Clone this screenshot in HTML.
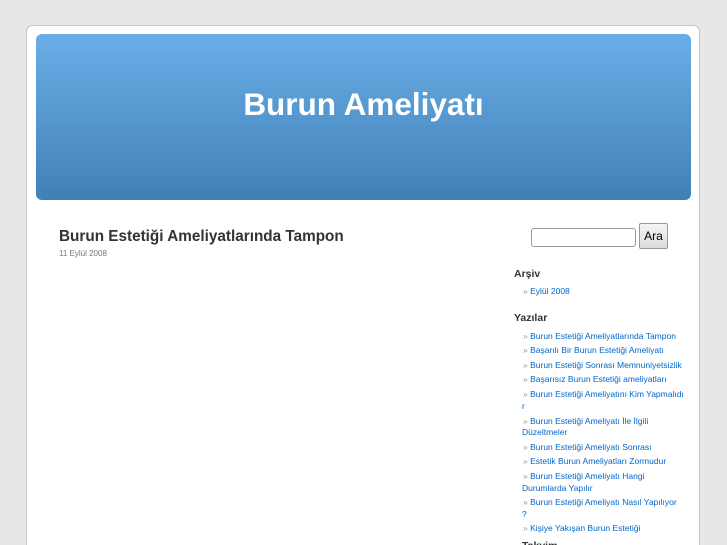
<html><head><style>
html,body{margin:0;width:727px;height:545px;overflow:hidden}
body{background:#e7e7e7;font-family:"Liberation Sans",sans-serif;position:relative}
#page{position:absolute;left:26px;top:25px;width:672px;height:560px;background:#fff;border:1px solid #c5c5c5;border-radius:6px}
#hdr{position:absolute;left:36px;top:34px;width:655px;height:166px;border-radius:6px;background:linear-gradient(#69aee7,#4180b6)}
#hdr h1{margin:0;position:absolute;top:52px;width:100%;text-align:center;color:#fff;font-size:31.5px;font-weight:bold}
.t{position:absolute;white-space:nowrap}
.a{color:#0066cc;font-size:8.5px}
.a::before{content:"» ";color:#999}
.c{color:#0066cc;font-size:8.5px}
h3{margin:0;font-size:10.5px;color:#333}
</style></head><body>
<div id="page"></div>
<div id="hdr"><h1>Burun Ameliyatı</h1></div>
<div class="t" style="left:59px;top:228px;font-size:15.3px;font-weight:bold;color:#333">Burun Estetiği Ameliyatlarında Tampon</div>
<div class="t" style="left:59px;top:249px;font-size:8px;color:#777">11 Eylül 2008</div>
<div class="t" style="left:531px;top:228px;width:103px;height:17px;border:1px solid #999;border-radius:3px"></div>
<div class="t" style="left:639px;top:223px;width:27px;height:24px;border:1px solid #999;border-radius:2px;background:linear-gradient(#f5f5f5,#ddd);font-size:12px;text-align:center;line-height:24px">Ara</div>
<h3 class="t" style="left:514px;top:268px">Arşiv</h3>
<div class="t a" style="left:523px;top:286px">Eylül 2008</div>
<h3 class="t" style="left:514px;top:312px">Yazılar</h3>
<div class="t a" style="left:523px;top:331px">Burun Estetiği Ameliyatlarında Tampon</div>
<div class="t a" style="left:523px;top:345px">Başarılı Bir Burun Estetiği Ameliyatı</div>
<div class="t a" style="left:523px;top:360px">Burun Estetiği Sonrası Memnuniyetsizlik</div>
<div class="t a" style="left:523px;top:374px">Başarısız Burun Estetiği ameliyatları</div>
<div class="t a" style="left:523px;top:389px">Burun Estetiği Ameliyatını Kim Yapmalıdı</div>
<div class="t c" style="left:522px;top:401px">r</div>
<div class="t a" style="left:523px;top:416px">Burun Estetiği Ameliyatı İle İlgili</div>
<div class="t c" style="left:522px;top:427px">Düzeltmeler</div>
<div class="t a" style="left:523px;top:442px">Burun Estetiği Ameliyatı Sonrası</div>
<div class="t a" style="left:523px;top:456px">Estetik Burun Ameliyatları Zormudur</div>
<div class="t a" style="left:523px;top:471px">Burun Estetiği Ameliyatı Hangi</div>
<div class="t c" style="left:522px;top:483px">Durumlarda Yapılır</div>
<div class="t a" style="left:523px;top:497px">Burun Estetiği Ameliyatı Nasıl Yapılıyor</div>
<div class="t c" style="left:522px;top:509px">?</div>
<div class="t a" style="left:523px;top:523px">Kişiye Yakışan Burun Estetiği</div>
<h3 class="t" style="left:522px;top:540px">Takvim</h3>
</body></html>
